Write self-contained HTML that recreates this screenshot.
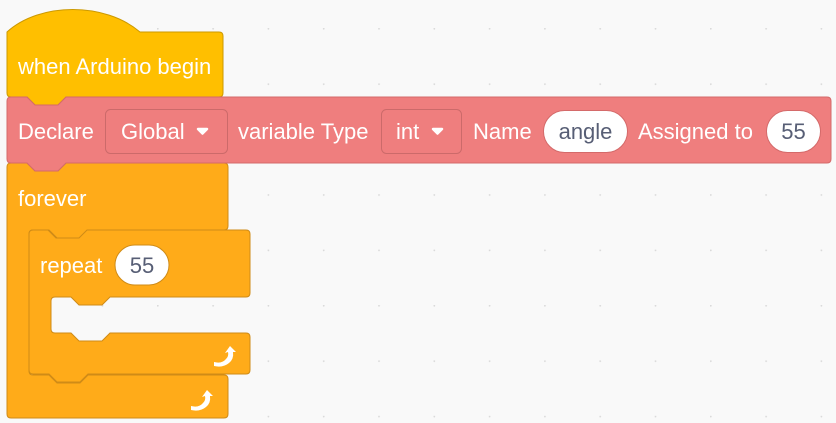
<!DOCTYPE html>
<html><head><style>
html,body{margin:0;padding:0;background:#f9f9f9;}
svg{display:block}
text{font-family:"Liberation Sans",Arial,sans-serif;font-size:22px;fill:#fff}
.v{fill:#575e75}
</style></head><body>
<svg width="836" height="423" viewBox="0 0 836 423" xmlns="http://www.w3.org/2000/svg">
<defs><pattern id="g" x="157" y="28" width="55.3" height="55.4" patternUnits="userSpaceOnUse"><circle cx="0.8" cy="0.8" r="0.9" fill="#d9d9d9"/></pattern></defs>
<rect width="836" height="423" fill="#f9f9f9"/>
<rect width="836" height="423" fill="url(#g)"/>

<path d="M7,32 C40,2 105,2 140,32 H219 q4,0 4,4 V93 q0,4 -4,4 H66 l-8,8 h-23 l-8,-8 H11 q-4,0 -4,-4 Z" fill="#FFBF00" stroke="#CC9900" stroke-width="1"/>
<text x="18" y="74">when Arduino begin</text>

<path d="M7,167 q0,-4 4,-4 H27 l8,8 h23 l8,-8 H224 q4,0 4,4 V226 q0,4 -4,4 H88 l-8,8 h-23 l-8,-8 H33 q-4,0 -4,4 V371 q0,4 4,4 H49 l8,8 h23 l8,-8 H224 q4,0 4,4 V414 q0,4 -4,4 H11 q-4,0 -4,-4 Z" fill="#FFAB19" stroke="#CF8B17" stroke-width="1"/>
<text x="18" y="206">forever</text>

<path d="M29,234 q0,-4 4,-4 H48 l8,8 h23 l8,-8 H246 q4,0 4,4 V293 q0,4 -4,4 H110 l-8,8 h-23 l-8,-8 H55 q-4,0 -4,4 V329 q0,4 4,4 H71 l8,8 h23 l8,-8 H246 q4,0 4,4 V370 q0,4 -4,4 H88 l-8,8 h-23 l-8,-8 H33 q-4,0 -4,-4 Z" fill="#FFAB19" stroke="#CF8B17" stroke-width="1"/>
<text x="40" y="273">repeat</text>
<rect x="115" y="245" width="54" height="40" rx="20" fill="#fff" stroke="#CF8B17"/>
<text x="142" y="273" class="v" text-anchor="middle">55</text>

<g fill="#fff">
<path d="M214,362 q8,2 12,-3 q3,-3 2,-7 l-3,1 l5,-7 l6,6 l-3,0 q1,7 -4,11 q-6,5 -15,3 Z"/>
<path d="M191,406 q8,2 12,-3 q3,-3 2,-7 l-3,1 l5,-7 l6,6 l-3,0 q1,7 -4,11 q-6,5 -15,3 Z"/>
</g>

<path d="M7,101 q0,-4 4,-4 H27 l8,8 h23 l8,-8 H827 q4,0 4,4 V159 q0,4 -4,4 H66 l-8,8 h-23 l-8,-8 H11 q-4,0 -4,-4 Z" fill="#EF7E7E" stroke="#D46A6A" stroke-width="1"/>
<text x="18" y="139">Declare</text>
<rect x="105.5" y="109.5" width="122" height="44" rx="5" fill="#EF7E7E" stroke="#CC6A6A"/>
<text x="121" y="139">Global</text>
<path d="M198,129 h9 l-4.5,4.5 z" fill="#fff" stroke="#fff" stroke-width="2.5" stroke-linejoin="round"/>
<text x="238" y="139">variable Type</text>
<rect x="381.5" y="109.5" width="80" height="44" rx="5" fill="#EF7E7E" stroke="#CC6A6A"/>
<text x="396" y="139">int</text>
<path d="M433,129 h9 l-4.5,4.5 z" fill="#fff" stroke="#fff" stroke-width="2.5" stroke-linejoin="round"/>
<text x="473" y="139">Name</text>
<rect x="543.5" y="110.5" width="84" height="42" rx="21" fill="#fff" stroke="#D46A6A"/>
<text x="585.5" y="139" class="v" text-anchor="middle">angle</text>
<text x="638" y="139">Assigned to</text>
<rect x="766.5" y="110.5" width="54" height="42" rx="21" fill="#fff" stroke="#D46A6A"/>
<text x="793.5" y="139" class="v" text-anchor="middle">55</text>
</svg>
</body></html>
